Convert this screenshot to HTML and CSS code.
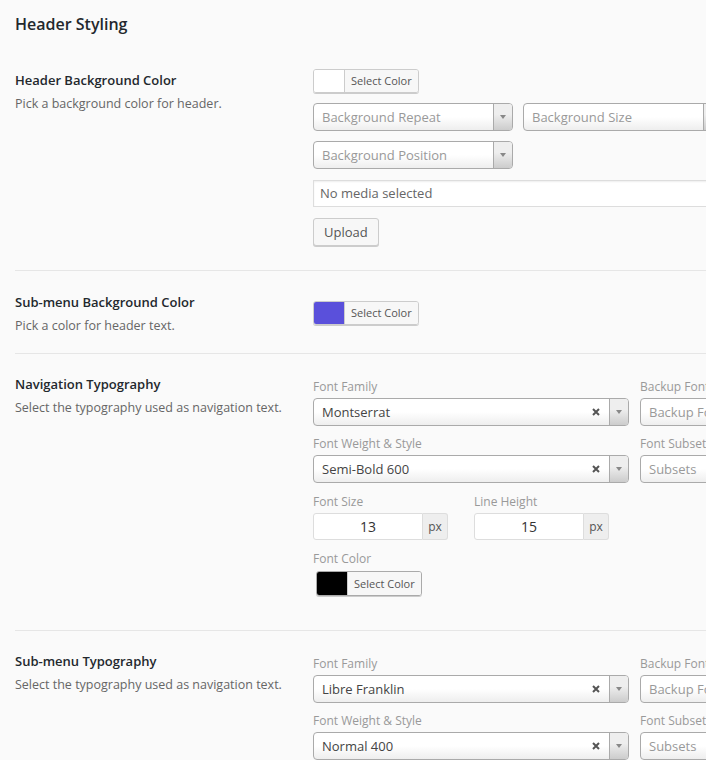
FILE: index.html
```html
<!DOCTYPE html>
<html lang="en">
<head>
<meta charset="utf-8">
<title>Header Styling</title>
<link rel="stylesheet" href="styles.css">
</head>
<body>
<div class="panel">
  <h2 class="panel-title">Header Styling</h2>

  <div class="row row-header-bg">
    <div class="row-label">
      <div class="label-title">Header Background Color</div>
      <div class="label-desc">Pick a background color for header.</div>
    </div>
    <div class="row-field">
      <div class="color-picker">
        <span class="swatch swatch-white"></span>
        <span class="color-text">Select Color</span>
      </div>
      <div class="select-line">
        <div class="select select-bg">
          <span class="select-text placeholder">Background Repeat</span>
          <span class="select-arrow"><i></i></span>
        </div>
        <div class="select select-bg">
          <span class="select-text placeholder">Background Size</span>
          <span class="select-arrow"><i></i></span>
        </div>
      </div>
      <div class="select-line">
        <div class="select select-bg">
          <span class="select-text placeholder">Background Position</span>
          <span class="select-arrow"><i></i></span>
        </div>
      </div>
      <div class="media-input">No media selected</div>
      <button class="wp-button" type="button">Upload</button>
    </div>
  </div>

  <div class="row row-submenu-bg">
    <div class="row-label">
      <div class="label-title">Sub-menu Background Color</div>
      <div class="label-desc">Pick a color for header text.</div>
    </div>
    <div class="row-field">
      <div class="color-picker">
        <span class="swatch swatch-purple"></span>
        <span class="color-text">Select Color</span>
      </div>
    </div>
  </div>

  <div class="row row-typo">
    <div class="row-label">
      <div class="label-title">Navigation Typography</div>
      <div class="label-desc">Select the typography used as navigation text.</div>
    </div>
    <div class="row-field">
      <div class="typo-grid">
        <div class="typo-item">
          <div class="field-label">Font Family</div>
          <div class="select select-wide">
            <span class="select-text">Montserrat</span>
            <span class="select-clear"><svg width="8" height="8" viewBox="0 0 8 8"><path d="M1 1L7 7M7 1L1 7" stroke="#555" stroke-width="2"/></svg></span>
            <span class="select-arrow"><i></i></span>
          </div>
        </div>
        <div class="typo-item">
          <div class="field-label">Backup Font Family</div>
          <div class="select select-wide">
            <span class="select-text placeholder">Backup Font Family</span>
            <span class="select-arrow"><i></i></span>
          </div>
        </div>
        <div class="typo-item">
          <div class="field-label">Font Weight &amp; Style</div>
          <div class="select select-wide">
            <span class="select-text">Semi-Bold 600</span>
            <span class="select-clear"><svg width="8" height="8" viewBox="0 0 8 8"><path d="M1 1L7 7M7 1L1 7" stroke="#555" stroke-width="2"/></svg></span>
            <span class="select-arrow"><i></i></span>
          </div>
        </div>
        <div class="typo-item">
          <div class="field-label">Font Subsets</div>
          <div class="select select-wide">
            <span class="select-text placeholder">Subsets</span>
            <span class="select-arrow"><i></i></span>
          </div>
        </div>
      </div>
      <div class="size-line">
        <div class="size-item">
          <div class="field-label">Font Size</div>
          <div class="unit-input">
            <span class="unit-value">13</span>
            <span class="unit-addon">px</span>
          </div>
        </div>
        <div class="size-item">
          <div class="field-label">Line Height</div>
          <div class="unit-input">
            <span class="unit-value">15</span>
            <span class="unit-addon">px</span>
          </div>
        </div>
      </div>
      <div class="field-label label-color">Font Color</div>
      <div class="color-picker color-picker-inset">
        <span class="swatch swatch-black"></span>
        <span class="color-text">Select Color</span>
      </div>
    </div>
  </div>

  <div class="row row-typo row-last">
    <div class="row-label">
      <div class="label-title">Sub-menu Typography</div>
      <div class="label-desc">Select the typography used as navigation text.</div>
    </div>
    <div class="row-field">
      <div class="typo-grid">
        <div class="typo-item">
          <div class="field-label">Font Family</div>
          <div class="select select-wide">
            <span class="select-text">Libre Franklin</span>
            <span class="select-clear"><svg width="8" height="8" viewBox="0 0 8 8"><path d="M1 1L7 7M7 1L1 7" stroke="#555" stroke-width="2"/></svg></span>
            <span class="select-arrow"><i></i></span>
          </div>
        </div>
        <div class="typo-item">
          <div class="field-label">Backup Font Family</div>
          <div class="select select-wide">
            <span class="select-text placeholder">Backup Font Family</span>
            <span class="select-arrow"><i></i></span>
          </div>
        </div>
        <div class="typo-item">
          <div class="field-label">Font Weight &amp; Style</div>
          <div class="select select-wide">
            <span class="select-text">Normal 400</span>
            <span class="select-clear"><svg width="8" height="8" viewBox="0 0 8 8"><path d="M1 1L7 7M7 1L1 7" stroke="#555" stroke-width="2"/></svg></span>
            <span class="select-arrow"><i></i></span>
          </div>
        </div>
        <div class="typo-item">
          <div class="field-label">Font Subsets</div>
          <div class="select select-wide">
            <span class="select-text placeholder">Subsets</span>
            <span class="select-arrow"><i></i></span>
          </div>
        </div>
      </div>
    </div>
  </div>
</div>
</body>
</html>
```

FILE: styles.css
```css
html, body {
  margin: 0;
  padding: 0;
  background: #fafafa;
  overflow: hidden;
}

body {
  font-family: "Open Sans", "Noto Sans", sans-serif;
  color: #444;
}

.panel {
  width: 1000px;
  padding-left: 15px;
}

.panel-title {
  margin: 0;
  padding-top: 12px;
  font-size: 16px;
  line-height: 24px;
  font-weight: 600;
  color: #23282d;
}

/* option rows */
.row {
  display: flex;
  align-items: flex-start;
  border-bottom: 1px solid #e6e6e6;
}

.row-label {
  width: 298px;
  flex: none;
}

.row-field {
  flex: 1;
  display: flex;
  flex-direction: column;
  align-items: flex-start;
}

.label-title {
  font-size: 13px;
  line-height: 20px;
  font-weight: 600;
  color: #23282d;
}

.label-desc {
  margin-top: 4px;
  font-size: 12.5px;
  line-height: 20px;
  color: #666;
}

.row-header-bg {
  padding: 33px 0 24px;
}
.row-header-bg .row-label {
  padding-top: 1px;
}

.row-submenu-bg {
  padding: 21px 0 17px;
}
.row-submenu-bg .row-field {
  padding-top: 9px;
}

.row-typo {
  padding: 20px 0 34px;
}
.row-typo .row-field {
  padding-top: 4px;
}
.row-last {
  border-bottom: none;
}

/* color picker button */
.color-picker {
  display: flex;
  height: 24px;
  border: 1px solid #ccc;
  border-radius: 3px;
  box-shadow: 0 1px 0 #ccc;
  overflow: hidden;
  box-sizing: border-box;
}

.swatch {
  width: 30px;
}
.swatch-white { background: #fff; }
.swatch-purple { background: #5a50db; }
.swatch-black { background: #000; }

.color-text {
  padding: 0 6px;
  border-left: 1px solid #ccc;
  background: #f7f7f7;
  font-size: 11px;
  line-height: 22px;
  color: #555;
}

.color-picker-inset {
  margin: 1px 0 0 3px;
  height: 25px;
  border-color: #aaa;
}
.color-picker-inset .color-text {
  line-height: 23px;
}

/* select2 style dropdowns */
.select-line {
  display: flex;
  gap: 10px;
  margin-top: 10px;
}

.select {
  position: relative;
  display: flex;
  align-items: center;
  height: 28px;
  box-sizing: border-box;
  border: 1px solid #aaa;
  border-radius: 4px;
  background: linear-gradient(to top, #eee 0%, #fff 50%);
  overflow: hidden;
}

.select-bg {
  width: 200px;
}

.select-wide {
  width: 316px;
}

.select-text {
  flex: 1;
  padding-left: 8px;
  font-size: 13px;
  color: #444;
  white-space: nowrap;
  overflow: hidden;
}

.select-text.placeholder {
  color: #999;
}

.select-clear {
  width: 8px;
  height: 8px;
  margin-right: 9px;
  display: flex;
}

.select-arrow {
  width: 18px;
  height: 100%;
  flex: none;
  display: flex;
  align-items: center;
  justify-content: center;
  border-left: 1px solid #aaa;
  background: linear-gradient(to top, #ccc 0%, #eee 60%);
}

.select-arrow i {
  width: 0;
  height: 0;
  border-left: 3px solid transparent;
  border-right: 3px solid transparent;
  border-top: 4px solid #888;
}

/* media field */
.media-input {
  margin-top: 11px;
  width: 500px;
  height: 27px;
  box-sizing: border-box;
  padding: 0 6px;
  border: 1px solid #ddd;
  background: #fff;
  box-shadow: inset 0 1px 2px rgba(0, 0, 0, 0.07);
  font-size: 13px;
  line-height: 25px;
  color: #666;
}

.wp-button {
  margin-top: 11px;
  height: 28px;
  padding: 0 10px;
  border: 1px solid #ccc;
  border-radius: 3px;
  background: #f7f7f7;
  box-shadow: 0 1px 0 #ccc;
  font-family: inherit;
  font-size: 13px;
  line-height: 26px;
  color: #555;
}

/* typography block */
.typo-grid {
  display: grid;
  grid-template-columns: 316px 316px;
  column-gap: 11px;
  row-gap: 9px;
}

.field-label {
  font-size: 12px;
  line-height: 18px;
  color: #999;
  margin-bottom: 2px;
  white-space: nowrap;
}

.size-line {
  display: flex;
  gap: 26px;
  margin-top: 10px;
}

.unit-input {
  display: flex;
  height: 27px;
}

.unit-value {
  width: 110px;
  box-sizing: border-box;
  border: 1px solid #ddd;
  border-radius: 3px 0 0 3px;
  background: #fff;
  text-align: center;
  font-size: 14px;
  line-height: 25px;
  color: #333;
}

.unit-addon {
  width: 25px;
  box-sizing: border-box;
  border: 1px solid #ddd;
  border-left: none;
  border-radius: 0 3px 3px 0;
  background: #eee;
  text-align: center;
  font-size: 12px;
  line-height: 25px;
  color: #555;
}

.label-color {
  margin-top: 10px;
}
```
